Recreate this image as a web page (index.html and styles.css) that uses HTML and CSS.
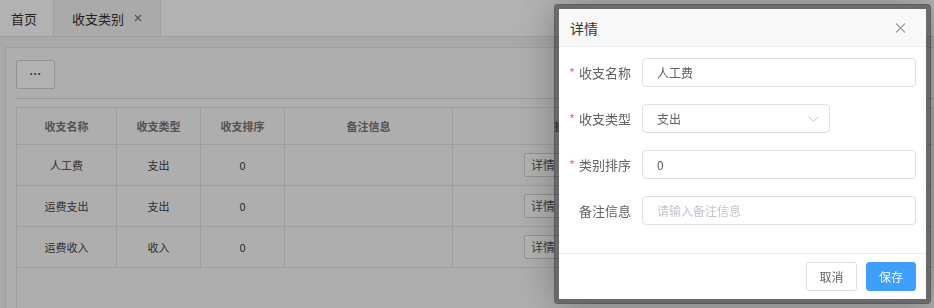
FILE: index.html
```html
<!DOCTYPE html>
<html lang="zh-CN">
<head>
  <meta charset="UTF-8" />
  <title>收支类别</title>
  <link rel="stylesheet" href="styles.css">
</head>
<body>

  <div class="page">
    <div class="tabs">
      <div class="tab home">首页</div>
      <div class="tab active">收支类别
        <svg class="tab-close" width="8" height="8" viewBox="0 0 8 8"><path d="M1 1L7 7M7 1L1 7" stroke="#777" stroke-width="1.2"/></svg>
      </div>
    </div>

    <div class="content">
      <div class="card">
        <div class="toolbar">
          <button class="more-btn">···</button>
        </div>
        <div class="table-box">
          <table class="grid">
            <thead>
              <tr>
                <th class="c-name">收支名称</th>
                <th class="c-type">收支类型</th>
                <th class="c-sort">收支排序</th>
                <th class="c-note">备注信息</th>
                <th class="c-op">操作</th>
                <th></th>
              </tr>
            </thead>
            <tbody>
              <tr>
                <td>人工费</td><td>支出</td><td>0</td><td></td>
                <td class="op"><button class="row-btn">详情</button></td><td></td>
              </tr>
              <tr>
                <td>运费支出</td><td>支出</td><td>0</td><td></td>
                <td class="op"><button class="row-btn">详情</button></td><td></td>
              </tr>
              <tr>
                <td>运费收入</td><td>收入</td><td>0</td><td></td>
                <td class="op"><button class="row-btn">详情</button></td><td></td>
              </tr>
            </tbody>
          </table>
        </div>
      </div>
    </div>
  </div>

  <div class="shade"></div>

  <div class="layer">
    <div class="layer-title">
      <span>详情</span>
      <svg class="layer-close" width="11" height="10" viewBox="0 0 11 10"><path d="M1 0.5L10 9.5M10 0.5L1 9.5" stroke="#9a9a9a" stroke-width="1.1"/></svg>
    </div>

    <div class="layer-body">
      <div class="form-row">
        <label class="form-label"><span class="req">*</span><span>收支名称</span></label>
        <div class="input">人工费</div>
      </div>
      <div class="form-row">
        <label class="form-label"><span class="req">*</span><span>收支类型</span></label>
        <div class="input select">支出
          <svg class="arrow" width="11" height="6" viewBox="0 0 11 6"><path d="M0.5 0.5L5.5 5.5L10.5 0.5" fill="none" stroke="#c0c4cc" stroke-width="1"/></svg>
        </div>
      </div>
      <div class="form-row">
        <label class="form-label"><span class="req">*</span><span>类别排序</span></label>
        <div class="input">0</div>
      </div>
      <div class="form-row">
        <label class="form-label"><span>备注信息</span></label>
        <div class="input placeholder">请输入备注信息</div>
      </div>
    </div>

    <div class="layer-foot">
      <button class="btn">取消</button>
      <button class="btn primary">保存</button>
    </div>
  </div>

</body>
</html>
```

FILE: styles.css
```css
body {
  margin: 0;
  width: 934px;
  height: 308px;
  overflow: hidden;
  font-family: "Noto Sans CJK SC", "Noto Sans", sans-serif;
  color: #333;
  background: #f2f2f2;
}

.page {
  height: 308px;
  display: flex;
  flex-direction: column;
}

.tabs {
  display: flex;
  height: 37px;
  box-sizing: border-box;
  background: #fff;
  border-bottom: 1px solid #e2e2e2;
}

.tab {
  display: flex;
  align-items: center;
  gap: 10px;
  padding: 0 11px;
  font-size: 13px;
  border-right: 1px solid #e2e2e2;
}

.tab.home {
  width: 54px;
  box-sizing: border-box;
}

.tab.active {
  padding: 0 18px;
  background: #f4f4f4;
}

.content {
  flex: 1;
  display: flex;
  padding: 10px 0 0 5px;
  min-height: 0;
}

.card {
  flex: 1;
  display: flex;
  flex-direction: column;
  background: #f9f9f9;
  border: 1px solid #e2e2e2;
  border-right: none;
  border-bottom: none;
  padding: 11px 0 0 10px;
}

.toolbar {
  padding-bottom: 9px;
  border-bottom: 1px solid #dcdcdc;
  margin-bottom: 8px;
}

.more-btn {
  width: 39px;
  height: 29px;
  background: #fff;
  border: 1px solid #d2d2d2;
  border-radius: 2px;
  font-size: 12px;
  font-weight: bold;
  color: #555;
  padding: 0;
}

.table-box {
  flex: 1;
  border-left: 1px solid #e2e2e2;
}

.grid {
  width: 100%;
  border-collapse: collapse;
  font-size: 11px;
  color: #555;
}

.grid th,
.grid td {
  border: 1px solid #e2e2e2;
  text-align: center;
  padding: 0;
}

.grid th {
  height: 36px;
  color: #777;
  font-weight: bold;
}

.grid td {
  height: 40px;
  color: #444;
}

.grid td.op {
  text-align: left;
  padding-left: 71px;
}

.grid tr > :first-child {
  border-left: none;
}

.c-name { width: 99px; }
.c-type { width: 83px; }
.c-sort { width: 83px; }
.c-note { width: 167px; }
.c-op { width: 225px; }

.row-btn {
  height: 24px;
  padding: 0 6px;
  border: 1px solid #d2d2d2;
  border-radius: 2px;
  background: #fff;
  font-family: inherit;
  font-size: 12px;
  color: #555;
}

.shade {
  position: fixed;
  inset: 0;
  background: rgba(0, 0, 0, 0.3);
}

.layer {
  position: fixed;
  left: 554px;
  top: 4px;
  width: 367px;
  height: 290px;
  display: flex;
  flex-direction: column;
  background: #fff;
  border: 5px solid rgba(0, 0, 0, 0.4);
  border-radius: 4px;
  background-clip: padding-box;
  box-shadow: 1px 1px 40px rgba(0, 0, 0, 0.3);
}

.layer-title {
  height: 38px;
  box-sizing: border-box;
  display: flex;
  align-items: center;
  justify-content: space-between;
  padding: 0 20px 0 11px;
  background: #f8f8f8;
  border-bottom: 1px solid #eee;
  font-size: 14px;
  color: #333;
}

.layer-body {
  height: 206px;
  box-sizing: border-box;
  padding: 11px 10px 0 0;
  display: flex;
  flex-direction: column;
  gap: 17px;
}

.form-row {
  display: flex;
  align-items: center;
}

.form-label {
  width: 83px;
  box-sizing: border-box;
  padding-right: 11px;
  display: flex;
  justify-content: flex-end;
  align-items: center;
  gap: 4px;
  font-size: 13px;
  color: #606266;
}

.req {
  color: #f56c6c;
}

.input {
  flex: 1;
  height: 29px;
  box-sizing: border-box;
  display: flex;
  align-items: center;
  padding: 0 14px;
  border: 1px solid #dcdfe6;
  border-radius: 4px;
  font-size: 12px;
  color: #606266;
}

.input.select {
  flex: none;
  width: 188px;
  justify-content: space-between;
  padding-right: 10px;
}

.input.placeholder {
  color: #c0c4cc;
}

.layer-foot {
  display: flex;
  justify-content: flex-end;
  gap: 9px;
  padding: 8px 10px;
  border-top: 1px solid #ebebeb;
}

.btn {
  height: 29px;
  width: 51px;
  padding: 0;
  border: 1px solid #dcdfe6;
  border-radius: 3px;
  background: #fff;
  font-family: inherit;
  font-size: 12px;
  color: #606266;
}

.btn.primary {
  width: 50px;
  background: #409eff;
  border-color: #409eff;
  color: #fff;
}
```
